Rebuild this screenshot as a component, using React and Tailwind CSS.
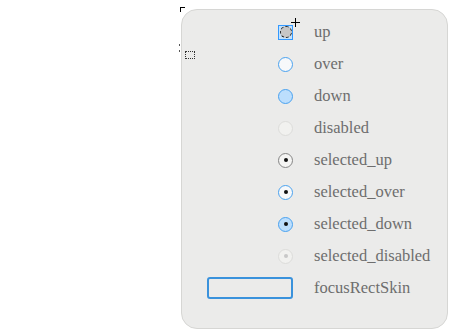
const rows = [
  { label: 'up', kind: 'up' },
  { label: 'over', ring: 'border-[#4aa2ef]', fill: 'bg-[#f7f8fa]' },
  { label: 'down', ring: 'border-[#4aa2ef]', fill: 'bg-[#bcdefd]' },
  { label: 'disabled', ring: 'border-[#dcdcda]', fill: 'bg-[#f1f1ef]' },
  { label: 'selected_up', ring: 'border-[#858585]', fill: 'bg-[#f4f4f3]', dot: 'bg-[#111]' },
  { label: 'selected_over', ring: 'border-[#4aa2ef]', fill: 'bg-[#f7f8fa]', dot: 'bg-[#111]' },
  { label: 'selected_down', ring: 'border-[#4aa2ef]', fill: 'bg-[#bcdefd]', dot: 'bg-[#111]' },
  { label: 'selected_disabled', ring: 'border-[#dcdcda]', fill: 'bg-[#f1f1ef]', dot: 'bg-[#c8c8c8]' },
  { label: 'focusRectSkin', kind: 'focus' },
]

function Skin({ row }) {
  if (row.kind === 'up') {
    return (
      <div className="relative w-[15px] h-[15px] border border-[#3399ff] bg-[#c4e2fc] flex items-center justify-center">
        <div className="w-[12px] h-[12px] rounded-full border-[1.5px] border-dashed border-[#222] bg-[#c6c6c6]" />
        <svg className="absolute -top-[8px] -right-[8px]" width="9" height="9" viewBox="0 0 9 9">
          <path d="M4.5 0v9M0 4.5h9" stroke="#000" strokeWidth="1" />
        </svg>
      </div>
    )
  }
  if (row.kind === 'focus') {
    return <div className="w-[86px] h-[22px] rounded-[3px] border-2 border-[#3a92dc]" />
  }
  return (
    <div className={`w-[15px] h-[15px] rounded-full border-[1.5px] flex items-center justify-center ${row.ring} ${row.fill}`}>
      {row.dot && <div className={`w-[4px] h-[4px] rounded-full ${row.dot}`} />}
    </div>
  )
}

export default function App() {
  return (
    <div className="relative w-[450px] h-[331px] bg-white overflow-hidden">
      {/* selection markers on the left edge */}
      <div className="absolute left-[180px] top-[7px] w-[5px] h-[5px] border-l border-t border-black" />
      <div className="absolute left-[179px] top-[44px] w-px h-[2px] bg-[#555]" />
      <div className="absolute left-[179px] top-[50px] w-px h-[2px] bg-[#555]" />
      <div className="absolute left-[185px] top-[51px] w-[10px] h-[8px] border border-dotted border-[#333]" />

      <div className="ml-[181px] mt-[9px] w-[267px] h-[320px] rounded-[16px] border border-[#d6d6d4] bg-[#ebebea] pt-[6px]">
        {rows.map((row) => (
          <div key={row.label} className="flex items-center h-[32px]">
            <div className="w-[111px] flex justify-end">
              <Skin row={row} />
            </div>
            <span
              className="ml-[21px] text-[16.5px] leading-none text-[#6e6e6e]"
              style={{ fontFamily: '"Liberation Serif", "Times New Roman", serif' }}
            >
              {row.label}
            </span>
          </div>
        ))}
      </div>
    </div>
  )
}
